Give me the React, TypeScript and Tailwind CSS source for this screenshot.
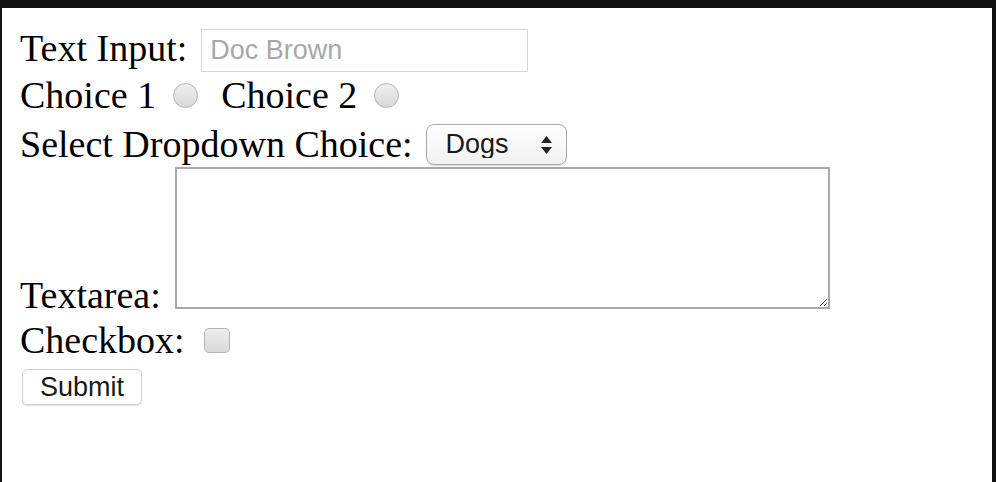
export default function App() {
  return (
    <div className="h-screen w-full bg-[#121212] pt-2 pl-[2px] pr-[4px]">
      <div className="h-full bg-white pl-[18px] font-['Liberation_Serif',serif] text-[38px] leading-none text-black">
        {/* text input */}
        <div className="flex items-start pt-[21px]">
          <span className="whitespace-pre">Text Input:</span>
          <input
            type="text"
            placeholder="Doc Brown"
            className="ml-[14px] h-[43px] w-[327px] border border-[#d6d6d6] px-[8px] font-['Liberation_Sans',sans-serif] text-[27px] outline-none placeholder:text-[#a8a8a8]"
          />
        </div>

        {/* radios */}
        <div className="flex h-[38px] items-center mt-[4px]">
          <span className="whitespace-pre">Choice 1</span>
          <input
            type="radio"
            name="choice"
            className="ml-[17px] h-[25px] w-[25px] appearance-none rounded-full border border-[#b4b4b4] bg-linear-to-b from-[#f0f0f0] to-[#d8d8d8]"
          />
          <span className="ml-[23px] whitespace-pre">Choice 2</span>
          <input
            type="radio"
            name="choice"
            className="ml-[17px] h-[25px] w-[25px] appearance-none rounded-full border border-[#b4b4b4] bg-linear-to-b from-[#f0f0f0] to-[#d8d8d8]"
          />
        </div>

        {/* select */}
        <div className="flex items-start mt-[10px]">
          <span className="mt-px whitespace-pre">Select Dropdown Choice:</span>
          <div className="relative ml-[13px] flex">
            <select className="h-[41px] w-[141px] appearance-none rounded-[8px] border border-[#a8a8a8] bg-linear-to-b from-white to-[#f1f1f1] pl-[19px] font-['Liberation_Sans',sans-serif] text-[27px] text-[#1a1a1a] shadow-[0_1px_1px_rgba(0,0,0,0.15)] outline-none">
              <option>Dogs</option>
              <option>Cats</option>
            </select>
            <svg
              className="pointer-events-none absolute right-[15px] top-[12px]"
              width="11"
              height="18"
              viewBox="0 0 11 18"
            >
              <path d="M5.5 0 L11 7 L0 7 Z" fill="#222" />
              <path d="M5.5 18 L11 11 L0 11 Z" fill="#222" />
            </svg>
          </div>
        </div>

        {/* textarea */}
        <div className="flex items-end mt-[2px]">
          <span className="whitespace-pre">Textarea:</span>
          <textarea className="ml-[14px] mb-[5px] h-[142px] w-[655px] border-2 border-[#a9a9a9] outline-none" />
        </div>

        {/* checkbox */}
        <div className="flex h-[38px] items-start mt-[7px]">
          <span className="whitespace-pre">Checkbox:</span>
          <input
            type="checkbox"
            className="ml-[19px] mt-[7px] h-[25px] w-[26px] appearance-none rounded-[5px] border border-[#b4b4b4] bg-linear-to-b from-[#eeeeee] to-[#d9d9d9]"
          />
        </div>

        {/* submit */}
        <button
          type="submit"
          className="mt-[10px] ml-[2px] h-[36px] w-[120px] rounded-[5px] border border-[#d2d2d2] bg-white font-['Liberation_Sans',sans-serif] text-[27px] text-[#1a1a1a] shadow-[0_1px_1px_rgba(0,0,0,0.12)]"
        >
          Submit
        </button>
      </div>
    </div>
  );
}
